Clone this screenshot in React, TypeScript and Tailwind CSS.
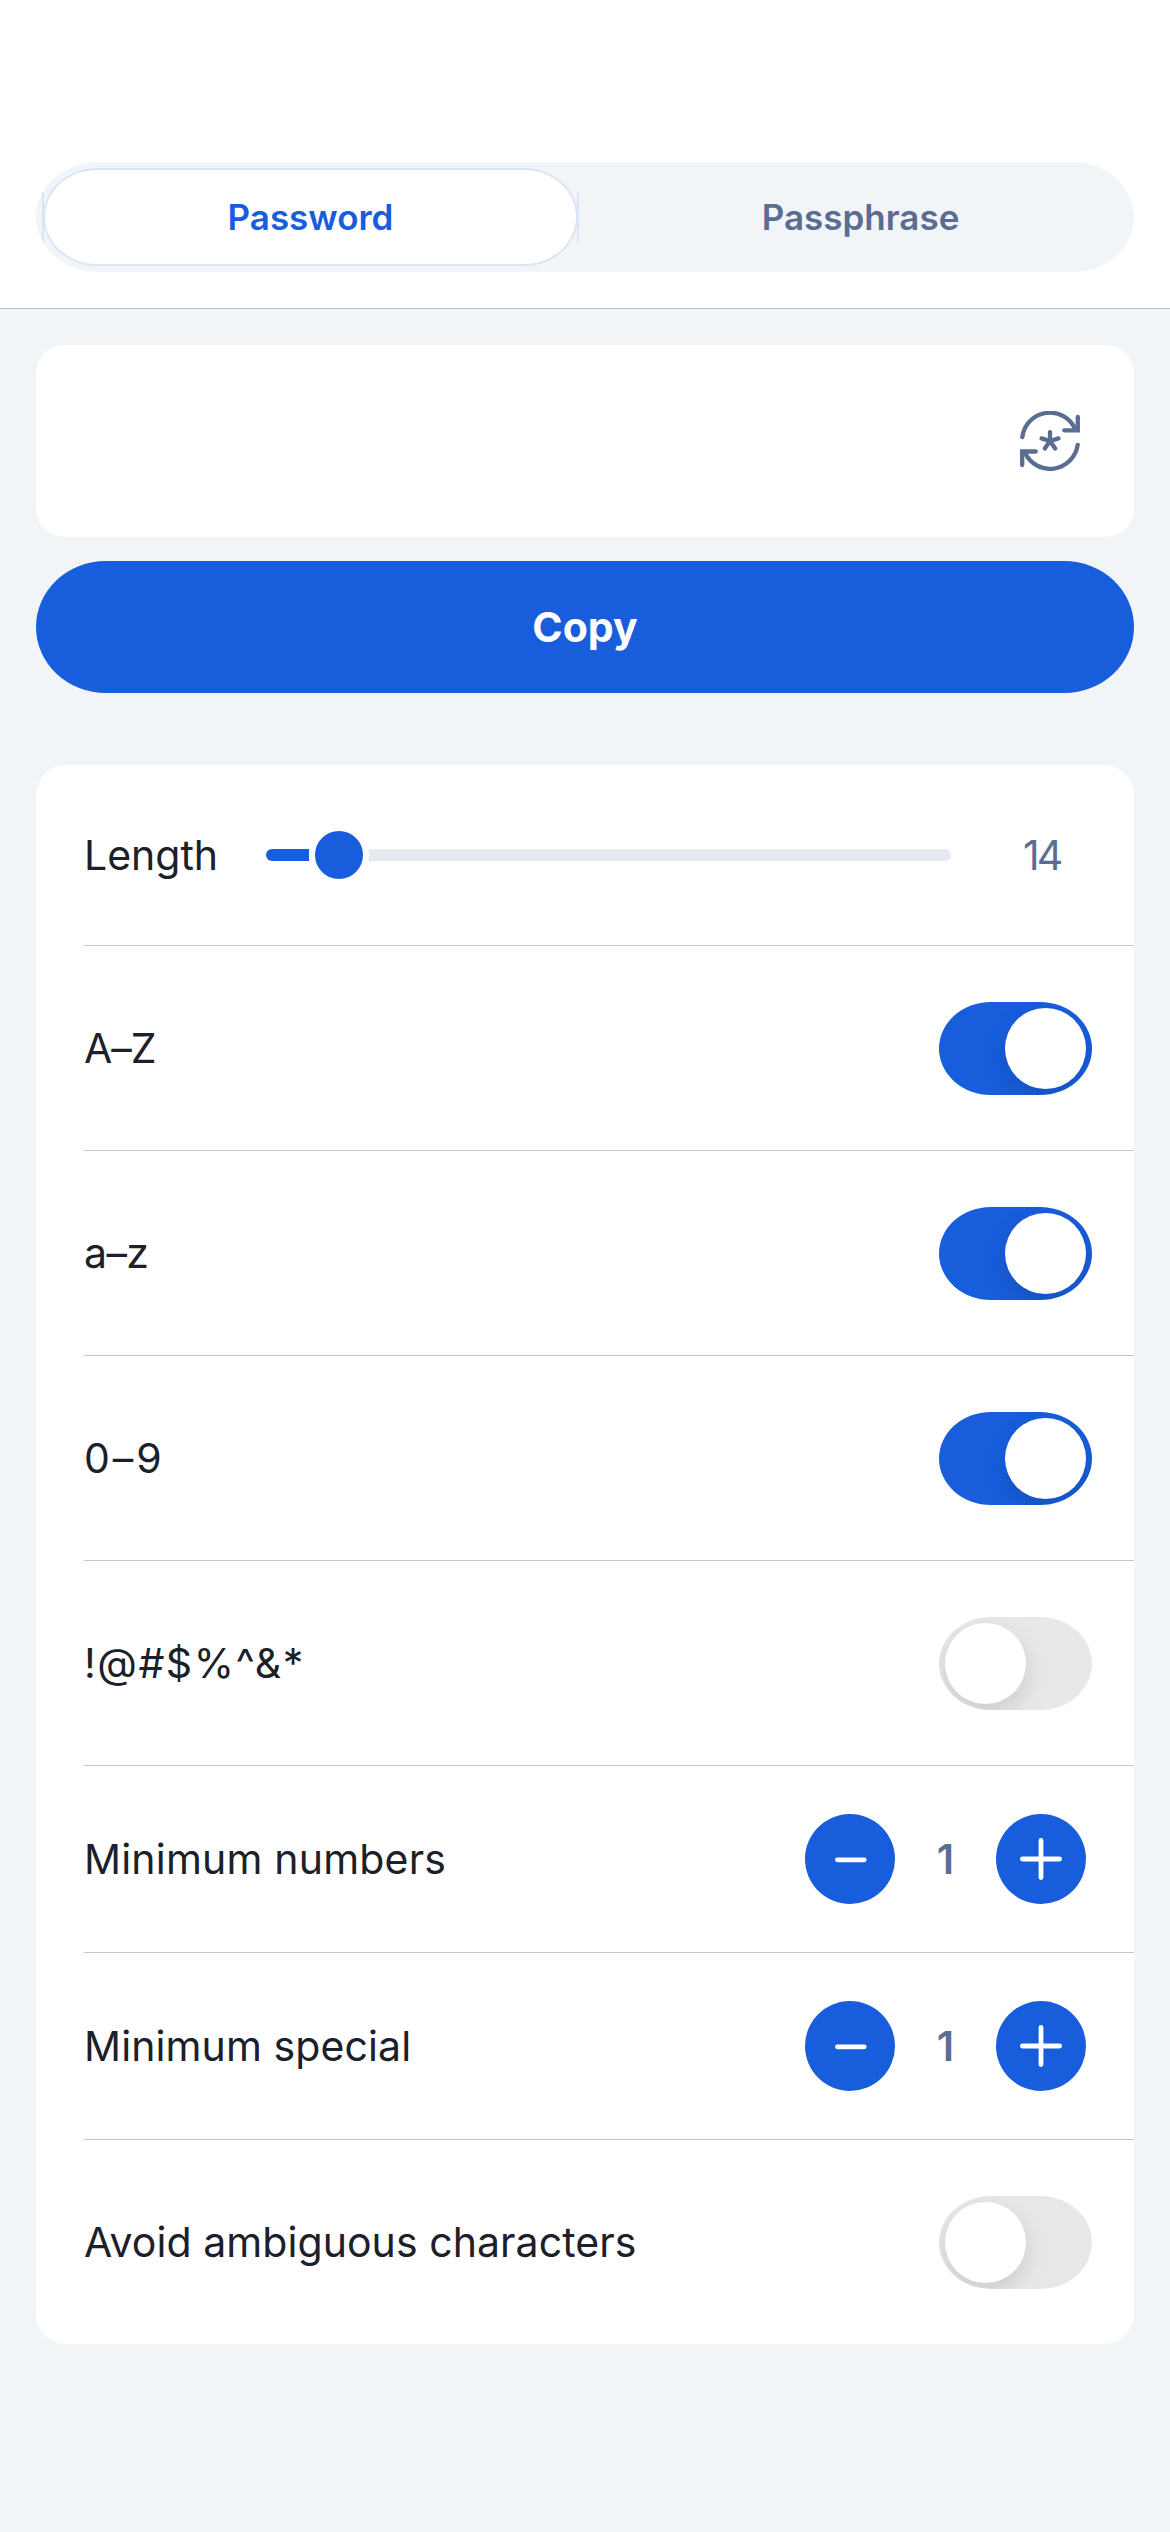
import type { ReactNode } from "react";

function RegenerateIcon() {
  return (
    <svg viewBox="0 0 60 60" className="h-[60px] w-[60px]" fill="none" stroke="#5a6d91" strokeWidth="4.3" strokeLinecap="round" strokeLinejoin="round">
      <path d="M2.3 26.2A27.8 27.8 0 0 1 55.4 18.4" />
      <path d="M57.8 6V19.3H44.2" strokeLinejoin="miter" />
      <path d="M57.7 33.8A27.8 27.8 0 0 1 4.8 41.4" />
      <path d="M2.2 54V40.5H15.8" strokeLinejoin="miter" />
      <path d="M30 30V21.2M30 30L21.5 27.4M30 30L38.5 27.4M30 30L24.8 37.4M30 30L35.2 37.4" />
    </svg>
  );
}

function Toggle({ on }: { on: boolean }) {
  return (
    <div
      role="switch"
      aria-checked={on}
      className={
        on
          ? "mt-[56px] mr-[42px] flex h-[93px] w-[153px] items-center justify-end overflow-hidden rounded-[52px/46.5px] bg-[#175ddc] p-[6px]"
          : "mt-[56px] mr-[42px] flex h-[93px] w-[153px] items-center justify-start overflow-hidden rounded-[52px/46.5px] bg-[#e8e8e8] p-[6px]"
      }
    >
      <div className="size-[81px] rounded-full bg-white shadow-[0_9px_24px_rgba(0,0,0,0.13)]" />
    </div>
  );
}

function StepButton({ plus }: { plus?: boolean }) {
  return (
    <button aria-label={plus ? "Increase" : "Decrease"} className="flex size-[90px] items-center justify-center rounded-full bg-[#175ddc]">
      <svg viewBox="0 0 90 90" className="size-[90px]" fill="none" stroke="#fff" strokeWidth="4.8" strokeLinecap="round">
        {plus ? <path d="M26.4 45H63.6M45 26.4V63.6" /> : <path d="M32.4 45.8H59.2" />}
      </svg>
    </button>
  );
}

function Stepper() {
  return (
    <div className="mt-[48px] mr-[48px] flex h-[90px] items-center">
      <StepButton />
      <span className="w-[101px] text-center text-[41px] font-semibold text-[#5a6d91]">1</span>
      <StepButton plus />
    </div>
  );
}

function Row({ label, tracking, height, last, children }: { label: string; tracking: string; height: string; last?: boolean; children: ReactNode }) {
  return (
    <div className={`ml-[48px] flex items-start justify-between ${height} ${last ? "" : "border-b border-[#c6c6c8]"}`}>
      <span className={`flex h-full items-center whitespace-nowrap ${tracking}`}>{label}</span>
      {children}
    </div>
  );
}

export default function App() {
  return (
    <div className="flex h-[2532px] w-[1170px] flex-col bg-[#f1f5f8] font-['Inter',sans-serif] text-[41px] leading-[50px] text-[#1b2029]">
      <header className="h-[309px] border-b border-[#babcc1] bg-white px-[36px] pt-[162px]">
        <div className="flex h-[110px] overflow-hidden rounded-[62px/55px] bg-[#f1f5f8] px-[6px] py-[6px] text-[35px] font-semibold">
          <div className="flex h-[98px] w-[537px] shrink-0 items-center bg-[linear-gradient(#dbe5f6,#dbe5f6),linear-gradient(#dbe5f6,#dbe5f6)] bg-[length:2px_51px] bg-[position:left_center,right_center] bg-no-repeat px-[1px]">
            <div className="flex h-[98px] w-full items-center justify-center rounded-[54px/49px] border-2 border-[#dbe5f6] bg-white text-[#175ddc]">
              Password
            </div>
          </div>
          <div className="flex grow items-center justify-center pl-[14px] text-[#5a6d91]">Passphrase</div>
        </div>
      </header>

      <main className="flex flex-col px-[36px] pt-[36px]">
        <section className="flex h-[192px] items-center justify-end rounded-[28px] bg-white pr-[54px]">
          <RegenerateIcon />
        </section>

        <button className="mt-[24px] flex h-[132px] items-center justify-center rounded-[70px/66px] bg-[#175ddc] font-bold text-white">Copy</button>

        <section className="mt-[72px] flex flex-col rounded-[30px] bg-white">
          <div className="ml-[48px] flex h-[181px] items-center border-b border-[#c6c6c8]">
            <span className="w-[182px]">Length</span>
            <div className="flex h-[60px] w-[685px] items-center">
              <div className="h-[12px] w-[43px] rounded-l-full bg-[#175ddc]" />
              <div className="z-10 -mr-[6px] size-[60px] shrink-0 rounded-full border-[6px] border-white bg-[#175ddc]" />
              <div className="h-[12px] grow rounded-r-full bg-[#e6e9f0]" />
            </div>
            <span className="ml-[72px] tracking-[-3px] text-[#5a6d91]">14</span>
          </div>
          <Row label="A–Z" tracking="tracking-[-1px]" height="h-[205px]"><Toggle on /></Row>
          <Row label="a–z" tracking="tracking-[-0.6px]" height="h-[205px]"><Toggle on /></Row>
          <Row label="0–9" tracking="tracking-[3px]" height="h-[205px]"><Toggle on /></Row>
          <Row label="!@#$%^&*" tracking="tracking-[1.5px]" height="h-[205px]"><Toggle on={false} /></Row>
          <Row label="Minimum numbers" tracking="tracking-[0.2px]" height="h-[187px]"><Stepper /></Row>
          <Row label="Minimum special" tracking="tracking-[0.1px]" height="h-[187px]"><Stepper /></Row>
          <Row label="Avoid ambiguous characters" tracking="tracking-[0.06px]" height="h-[204px]" last><Toggle on={false} /></Row>
        </section>
      </main>
    </div>
  );
}
